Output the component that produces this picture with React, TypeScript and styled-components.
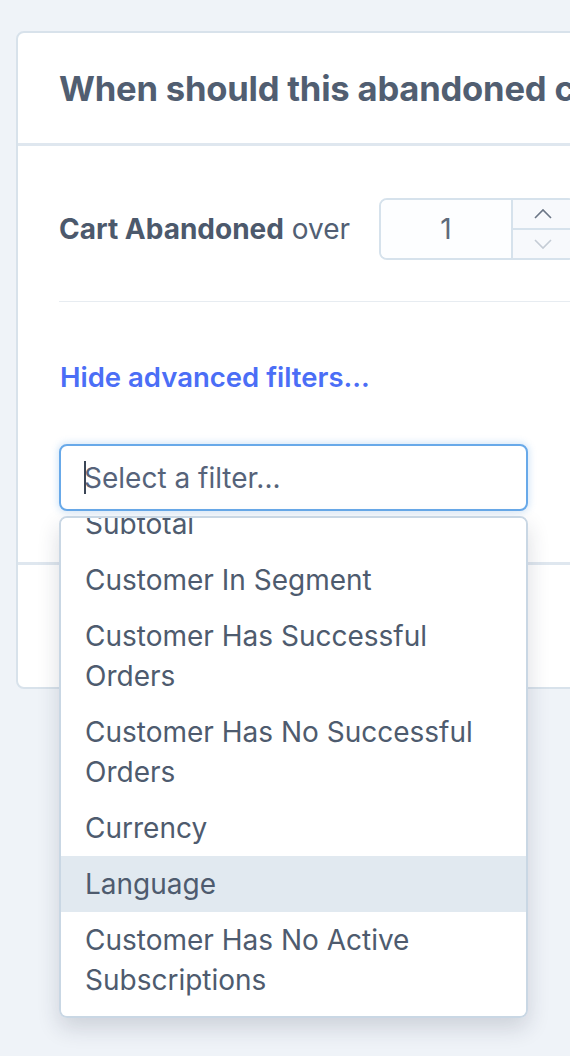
import { useLayoutEffect, useRef } from 'react'
import styled, { createGlobalStyle } from 'styled-components'

const filters = [
    "Cart Total",
    "Product In Cart",
    "Product Not In Cart",
    "Subtotal",
    "Customer In Segment",
    "Customer Has Successful Orders",
    "Customer Has No Successful Orders",
    "Currency",
    "Language",
    "Customer Has No Active Subscriptions",
]

const GlobalStyle = createGlobalStyle`
    html, body {
        margin: 0;
        padding: 0;
        background: #eff3f8;
        overflow: hidden;
        font-family: Inter, "Noto Sans", "Liberation Sans", sans-serif;
        color: #4e5b6e;
    }
`

const Page = styled.div`
    padding: 31px 0 0 16px;
    min-height: 1056px;
    box-sizing: border-box;
`

const Card = styled.section`
    width: 820px;
    background: #fff;
    border: 2px solid #d8e2eb;
    border-radius: 8px;
`

const Header = styled.header`
    height: 110px;
    padding: 0 41px;
    display: flex;
    align-items: center;
    border-bottom: 3px solid #dfe7ef;
`

const Title = styled.h2`
    margin: 0;
    font-size: 34.6px;
    font-weight: 700;
    color: #515e71;
    white-space: nowrap;
    letter-spacing: -0.2px;
`

const Body = styled.div`
    padding: 52px 41px 51px;
`

const Row = styled.div`
    display: flex;
    align-items: center;
    gap: 29px;
    padding-bottom: 41px;
    border-bottom: 1.5px solid #e7ecf1;
`

const Label = styled.span`
    font-size: 28px;
    color: #525f74;
    white-space: nowrap;

    b {
        font-weight: 700;
        color: #4c596c;
    }
`

const Stepper = styled.div`
    display: flex;
    height: 62px;
    box-sizing: border-box;
    border: 2px solid #d6e2ec;
    border-radius: 8px;
    overflow: hidden;
`

const StepValue = styled.div`
    width: 135px;
    display: flex;
    align-items: center;
    justify-content: center;
    font-size: 28px;
    color: #5f6b7b;
    background: #fdfeff;
    border-right: 2px solid #d6e2ec;
`

const StepButtons = styled.div`
    width: 64px;
    display: flex;
    flex-direction: column;
    background: #f7f9fc;
`

const StepButton = styled.div<{ $faded?: boolean }>`
    flex: 1;
    display: flex;
    align-items: center;
    justify-content: center;
    color: ${p => (p.$faded ? '#c4ccd5' : '#6b7686')};

    & + & {
        border-top: 2px solid #d6e2ec;
    }
`

const Unit = styled.div`
    height: 62px;
    width: 200px;
    border: 2px solid #d6e2ec;
    border-radius: 8px;
    box-sizing: border-box;
`

const ToggleLink = styled.a`
    display: block;
    margin: 59px 0 51px 1px;
    font-size: 27.5px;
    font-weight: 600;
    color: #4b6ef6;
    text-decoration: none;
    line-height: 32px;
`

const SelectWrap = styled.div`
    position: relative;
    width: 469px;
`

const FilterInput = styled.input`
    display: block;
    width: 100%;
    height: 67px;
    box-sizing: border-box;
    padding: 0 23px;
    border: 2px solid #68a9e9;
    border-radius: 8px;
    box-shadow: 0 0 6px 2px rgba(104, 169, 233, 0.25);
    font-family: inherit;
    font-size: 28px;
    color: #4e5b6e;
    caret-color: transparent;
    outline: none;

    &::placeholder {
        color: #56637a;
    }
`

/* text cursor drawn over the empty, focused field */
const Caret = styled.span`
    position: absolute;
    left: 25px;
    top: 17px;
    width: 2px;
    height: 33px;
    background: #3b4656;
    pointer-events: none;
`

const Menu = styled.ul`
    position: absolute;
    top: calc(100% + 5px);
    left: 0;
    right: 0;
    height: 502px;
    box-sizing: border-box;
    margin: 0;
    padding: 8px 0;
    list-style: none;
    background: #fff;
    border: 2px solid #c9d7e4;
    border-radius: 8px;
    box-shadow: 0 10px 22px rgba(30, 40, 60, 0.16);
    overflow-y: auto;
    scrollbar-width: none;

    &::-webkit-scrollbar {
        display: none;
    }
`

const Option = styled.li<{ $active?: boolean }>`
    padding: 8px 24px;
    font-size: 28px;
    line-height: 40px;
    color: #4e5b6e;
    background: ${p => (p.$active ? '#e1e9f0' : 'transparent')};
`

const Footer = styled.footer`
    height: 122px;
    border-top: 3px solid #dfe7ef;
`

const Chevron = ({ down }: { down?: boolean }) => (
    <svg width="20" height="12" viewBox="0 0 20 12" fill="none" stroke="currentColor" strokeWidth="1.6">
        {down ? <polyline points="2,2 10,10 18,2" /> : <polyline points="2,10 10,2 18,10" />}
    </svg>
)

const App = () => {
    const menuRef = useRef<HTMLUListElement>(null)
    const firstShownRef = useRef<HTMLLIElement>(null)

    // the list is scrolled so "Subtotal" sits half under the top edge
    useLayoutEffect(() => {
        if (menuRef.current && firstShownRef.current) {
            menuRef.current.scrollTop = firstShownRef.current.offsetTop - menuRef.current.clientTop + 24
        }
    }, [])

    return (
        <Page>
            <GlobalStyle />
            <Card>
                <Header>
                    <Title>When should this abandoned cart email be sent?</Title>
                </Header>
                <Body>
                    <Row>
                        <Label><b>Cart Abandoned</b> over</Label>
                        <Stepper>
                            <StepValue>1</StepValue>
                            <StepButtons>
                                <StepButton><Chevron /></StepButton>
                                <StepButton $faded><Chevron down /></StepButton>
                            </StepButtons>
                        </Stepper>
                        <Unit />
                    </Row>
                    <ToggleLink href="#">Hide advanced filters...</ToggleLink>
                    <SelectWrap>
                        <FilterInput placeholder="Select a filter..." />
                        <Caret />
                        <Menu ref={menuRef}>
                            {filters.map(name => (
                                <Option
                                    key={name}
                                    ref={name === "Subtotal" ? firstShownRef : undefined}
                                    $active={name === "Language"}
                                >
                                    {name}
                                </Option>
                            ))}
                        </Menu>
                    </SelectWrap>
                </Body>
                <Footer />
            </Card>
        </Page>
    )
}

export default App
